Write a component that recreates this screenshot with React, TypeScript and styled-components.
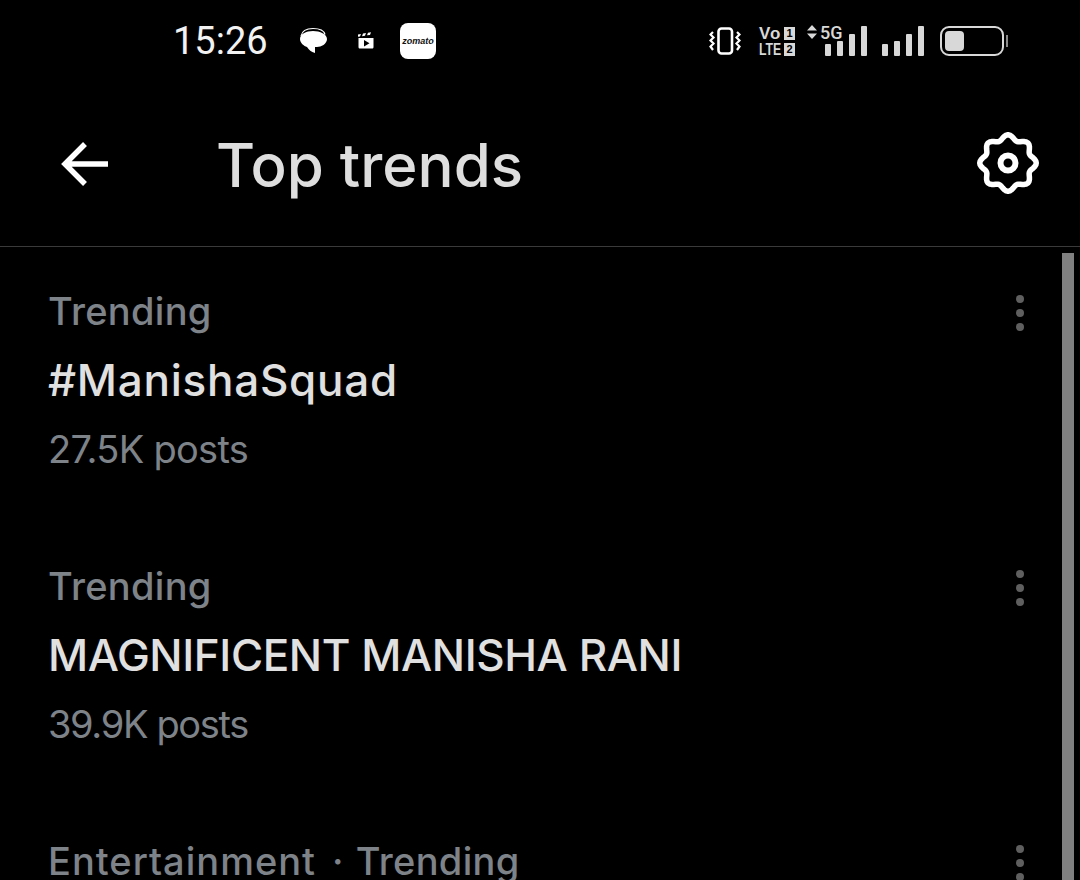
import { createGlobalStyle } from 'styled-components'
import styled from 'styled-components'

const GlobalStyle = createGlobalStyle`
    html, body {
        margin: 0;
        padding: 0;
        background: #000;
    }
`

// the last row runs off the bottom of the screen, only its label shows
const trends = [
    { topic: '', title: '#ManishaSquad', posts: '27.5K posts', spacing: 0.75, postSpacing: -0.7 },
    { topic: '', title: 'MAGNIFICENT MANISHA RANI', posts: '39.9K posts', spacing: -0.42, postSpacing: -1.35 },
    { topic: 'Entertainment', title: '', posts: '', spacing: 0, postSpacing: 0 },
]

// wavy outline of the settings gear, 8 lobes round the centre of a 64 box
const gearPath = Array.from({ length: 96 }, (_, i) => {
    const angle = (i / 96) * Math.PI * 2
    const r = 25.75 + 2.5 * Math.cos(8 * angle)
    return `${i === 0 ? 'M' : 'L'}${(32 + r * Math.sin(angle)).toFixed(2)} ${(32 - r * Math.cos(angle)).toFixed(2)}`
}).join('') + 'Z'

function ChatIcon() {
    return <svg width="32" height="32" viewBox="0 0 32 32">
        <path d="M3 11C4 6 9 3.500 15 3.500c6 0 11 2 12 6" fill="none" stroke="#fff" strokeWidth="1.200" />
        <path d="M2 14c0-5 6-8 13-8s14 3 14 8-6 8-10 8c-1 0-2 0-2 0v6c-4-1-6-3-8-6-3-1-7-4-7-8z" fill="#fff" />
    </svg>
}

function ClapIcon() {
    return <svg width="20" height="20" viewBox="0 0 20 20">
        <path d="M2 3.500l3-.6-1 2.600-2 .3zM7 2.600l3-.5-1 2.700-3 .4zM12 1.800l3-.5-1 2.600-3 .4z" fill="#fff" />
        <path d="M2.500 7h15v9c0 1-.6 1.500-1.500 1.500H4c-.9 0-1.500-.5-1.500-1.500z" fill="#fff" />
        <path d="M8 9l5.500 3.200L8 15.400z" fill="#000" />
    </svg>
}

function VibrateIcon() {
    return <svg width="32" height="32" viewBox="0 0 32 32" fill="none" stroke="#fff">
        <rect x="9.500" y="3.500" width="13.500" height="25" rx="3" strokeWidth="2.600" />
        <path d="M4 7l-2.500 2.500 3 3-3 3 3 3-3 3L4 25M28 7l2.500 2.500-3 3 3 3-3 3 3 3L28 25" strokeWidth="2.200" />
    </svg>
}

function GearIcon() {
    return <svg width="64" height="64" viewBox="0 0 64 64" fill="none" stroke="#fff" strokeWidth="5.500" strokeLinejoin="round">
        <path d={gearPath} />
        <circle cx="32" cy="32" r="7.500" strokeWidth="6" />
    </svg>
}

function BackIcon() {
    return <svg width="56" height="56" viewBox="0 0 56 56" fill="none" stroke="#fff" strokeWidth="5.500">
        <path d="M52 27H9M29 7 9 27l20 20" />
    </svg>
}

export default function App() {
    return <Page>
        <GlobalStyle />
        <StatusBar>
            <Time>15:26</Time>
            <Notifications>
                <ChatIcon />
                <ClapIcon />
                <ZomatoIcon>zomato</ZomatoIcon>
            </Notifications>
            <SystemIcons>
                <VibrateIcon />
                <Sims>
                    <SimRow><VoText>Vo</VoText><SimBadge>1</SimBadge></SimRow>
                    <SimRow><LteText>LTE</LteText><SimBadge>2</SimBadge></SimRow>
                </Sims>
                <Network>
                    <NetworkLabel>
                        <Arrows />
                        <FiveG>5G</FiveG>
                    </NetworkLabel>
                    <Bars>
                        <Bar $height={12} />
                        <Bar $height={15} />
                        <Bar $height={22} />
                        <Bar $height={30} />
                    </Bars>
                </Network>
                <Bars>
                    <Bar $height={12} />
                    <Bar $height={15} />
                    <Bar $height={22} />
                    <Bar $height={30} />
                </Bars>
                <Battery>
                    <BatteryBody><BatteryFill /></BatteryBody>
                    <BatteryCap />
                </Battery>
            </SystemIcons>
        </StatusBar>
        <Header>
            <BackButton><BackIcon /></BackButton>
            <Title>Top trends</Title>
            <SettingsButton><GearIcon /></SettingsButton>
        </Header>
        <List>
            {trends.map((trend, i) => <Row key={i}>
                <RowText>
                    <Label>
                        {trend.topic && <><Topic>{trend.topic}</Topic><Separator>·</Separator></>}
                        Trending
                    </Label>
                    {trend.title && <TrendName $spacing={trend.spacing}>{trend.title}</TrendName>}
                    {trend.posts && <Posts $spacing={trend.postSpacing}>{trend.posts}</Posts>}
                </RowText>
                <Dots><Dot /><Dot /><Dot /></Dots>
            </Row>)}
            <Scrollbar />
        </List>
    </Page>
}

const Page = styled.div`
    width: 1080px;
    height: 880px;
    overflow: hidden;
    background: #000;
    color: #fff;
    font-family: Inter, "Liberation Sans", sans-serif;
`

const StatusBar = styled.div`
    height: 82px;
    display: flex;
    align-items: center;
    padding-left: 173px;
    padding-right: 72px;
    box-sizing: border-box;
`

const Time = styled.span`
    width: 123px;
    font-family: Roboto, sans-serif;
    font-size: 38px;
    color: #f2f2f2;
`

const Notifications = styled.div`
    display: flex;
    align-items: center;
    & > svg:first-child { margin-left: 2px; margin-right: 26px; }
    & > svg:nth-child(2) { margin-right: 24px; }
`

const ZomatoIcon = styled.div`
    width: 36px;
    height: 36px;
    border-radius: 8px;
    background: #fff;
    color: #111;
    display: flex;
    align-items: center;
    justify-content: center;
    font-family: "Liberation Sans", sans-serif;
    font-size: 9px;
    font-weight: 700;
    font-style: italic;
`

const SystemIcons = styled.div`
    margin-left: auto;
    display: flex;
    align-items: center;
    color: #d8d8d8;
`

const Sims = styled.div`
    margin-left: 18px;
    display: flex;
    flex-direction: column;
    gap: 3px;
    width: 36px;
`

const SimRow = styled.div`
    display: flex;
    justify-content: space-between;
    align-items: center;
    height: 13px;
`

const VoText = styled.span`
    font-family: "Liberation Sans", sans-serif;
    font-size: 17px;
    font-weight: 700;
    letter-spacing: 1px;
    line-height: 13px;
`

const LteText = styled(VoText)`
    flex: 0 0 24px;
    min-width: 0;
    letter-spacing: 0;
    white-space: nowrap;
    transform: scaleX(0.72);
    transform-origin: left center;
`

const SimBadge = styled.span`
    flex: 0 0 11px;
    height: 13px;
    background: #d8d8d8;
    color: #000;
    font-family: "Liberation Sans", sans-serif;
    font-size: 11px;
    font-weight: 700;
    line-height: 13px;
    text-align: center;
`

const Network = styled.div`
    position: relative;
    margin-left: 12px;
    display: flex;
    align-items: flex-end;
    padding-left: 18px;
    height: 30px;
`

const NetworkLabel = styled.div`
    position: absolute;
    left: 0;
    top: -1px;
    display: flex;
    align-items: flex-start;
    gap: 3px;
`

const Arrows = styled.span`
    width: 10px;
    height: 14px;
    background: #d8d8d8;
    clip-path: polygon(50% 0, 100% 40%, 0 40%, 0 60%, 100% 60%, 50% 100%, 0 60%, 0 40%);
`

const FiveG = styled.span`
    font-family: Roboto, sans-serif;
    font-size: 18px;
    font-weight: 500;
    line-height: 15px;
    color: #d8d8d8;
`

const Bars = styled.div`
    display: flex;
    align-items: flex-end;
    gap: 6px;
    height: 30px;
    ${Network} + & { margin-left: 15px; }
`

const Bar = styled.span<{ $height: number }>`
    display: block;
    width: 6px;
    height: ${p => p.$height}px;
    background: #d8d8d8;
    border-radius: 1px;
`

const Battery = styled.div`
    margin-left: 16px;
    display: flex;
    align-items: center;
    gap: 2px;
`

const BatteryBody = styled.div`
    width: 64px;
    height: 30px;
    box-sizing: border-box;
    border: 2px solid #d8d8d8;
    border-radius: 9px;
    padding: 3px;
`

const BatteryFill = styled.div`
    width: 19px;
    height: 100%;
    background: #d8d8d8;
    border-radius: 4px;
`

const BatteryCap = styled.div`
    width: 2px;
    height: 12px;
    background: #888;
`

const Header = styled.div`
    height: 164px;
    display: flex;
    align-items: center;
    padding: 0 40px 0 56px;
    border-bottom: 1px solid #3a3a3a;
`

const BackButton = styled.div`
    width: 160px;
    display: flex;
    margin-top: 1px;
`

const Title = styled.h1`
    margin: 2px 0 0;
    font-size: 60px;
    font-weight: 500;
    color: #dedede;
    flex: 1;
`

const SettingsButton = styled.div`
    display: flex;
    margin-top: -2px;
`

const List = styled.div`
    position: relative;
    padding-left: 48px;
`

const Row = styled.div`
    height: 275px;
    padding-top: 39px;
    box-sizing: border-box;
    display: flex;
    justify-content: space-between;
    align-items: flex-start;
`

const RowText = styled.div`
    display: flex;
    flex-direction: column;
    gap: 19px;
`

const Label = styled.div`
    font-size: 38px;
    font-weight: 500;
    line-height: 50px;
    letter-spacing: 0.3px;
    color: #7d8389;
`

const Topic = styled.span`
    letter-spacing: 1px;
`

const Separator = styled.span`
    margin: 0 12px 0 16px;
`

const TrendName = styled.div<{ $spacing: number }>`
    font-size: 44px;
    font-weight: 500;
    line-height: 50px;
    letter-spacing: ${p => p.$spacing}px;
    color: #e0e0e0;
`

const Posts = styled.div<{ $spacing: number }>`
    font-size: 38px;
    line-height: 50px;
    letter-spacing: ${p => p.$spacing}px;
    color: #7d8389;
`

const Dots = styled.div`
    width: 64px;
    padding-top: 9px;
    display: flex;
    flex-direction: column;
    gap: 6px;
    align-items: flex-start;
`

const Dot = styled.span`
    width: 8px;
    height: 8px;
    border-radius: 50%;
    background: #5f5f5f;
`

const Scrollbar = styled.div`
    position: absolute;
    top: 6px;
    right: 6px;
    width: 12px;
    height: 630px;
    background: #808080;
`
